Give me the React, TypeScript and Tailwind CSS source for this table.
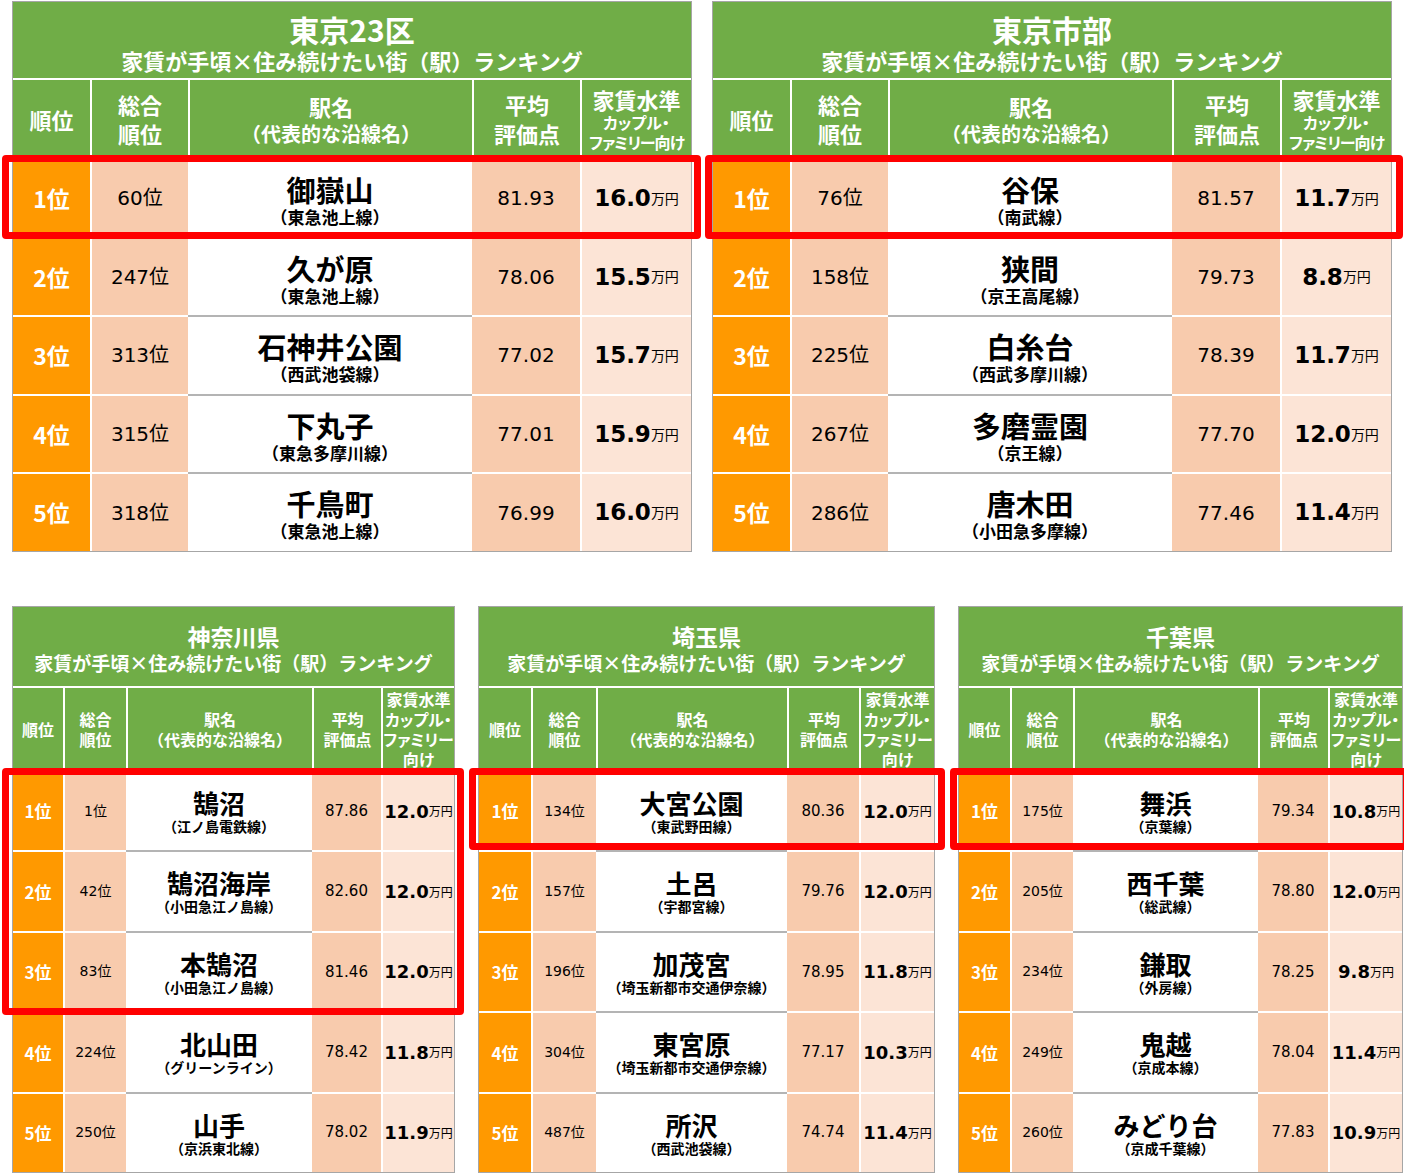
import React from "react";

type Row = { rank: number; total: number; name: string; line: string; score: string; rent: string };

type Size = {
  wrap: string;
  cols: string;
  titleBox: string;
  title: string;
  sub: string;
  headRow: string;
  headMain: string;
  headSub: string;
  row: string;
  rank: string;
  total: string;
  nameBox: string;
  name: string;
  line: string;
  score: string;
  rentNum: string;
  rentUnit: string;
  big: boolean;
};

const jp = "font-['Noto_Sans_CJK_JP',sans-serif]";
const num = "font-['DejaVu_Sans','Noto_Sans_CJK_JP',sans-serif]";

const lg = {
  titleBox: "h-[78px] pt-[10px]",
  title: "text-[30px] leading-[34px]",
  sub: "text-[22px] leading-[28px]",
  headRow: "h-[78px]",
  headMain: "text-[22px] leading-[29px]",
  headSub: "text-[20px] leading-[26px]",
  row: "h-[78.6px]",
  rank: "text-[23px]",
  total: "text-[20px]",
  nameBox: "pt-[12px]",
  name: "text-[29px] leading-[35px]",
  line: "text-[17px] leading-[20px]",
  score: "text-[20px]",
  rentNum: "text-[23px]",
  rentUnit: "text-[14px]",
  big: true,
};

const sm = {
  titleBox: "h-[81px] pt-[14px]",
  title: "text-[23px] leading-[30px]",
  sub: "text-[19px] leading-[24px]",
  headRow: "h-[82px]",
  headMain: "text-[16px] leading-[20px]",
  headSub: "text-[16px] leading-[20px]",
  row: "h-[80.4px]",
  rank: "text-[17px]",
  total: "text-[14px]",
  nameBox: "pt-[15px]",
  name: "text-[26px] leading-[32px]",
  line: "text-[14px] leading-[15px]",
  score: "text-[15px]",
  rentNum: "text-[18px]",
  rentUnit: "text-[12px]",
  big: false,
};

const tables: { title: string; size: Size; hl: string; rows: Row[] }[] = [
  {
    title: "東京23区",
    size: { ...lg, wrap: "w-[680px]", cols: "grid-cols-[77px_98px_284px_108px_111px]" },
    hl: "-left-[10px] top-[154px] w-[699px] h-[84px]",
    rows: [
      { rank: 1, total: 60, name: "御嶽山", line: "東急池上線", score: "81.93", rent: "16.0" },
      { rank: 2, total: 247, name: "久が原", line: "東急池上線", score: "78.06", rent: "15.5" },
      { rank: 3, total: 313, name: "石神井公園", line: "西武池袋線", score: "77.02", rent: "15.7" },
      { rank: 4, total: 315, name: "下丸子", line: "東急多摩川線", score: "77.01", rent: "15.9" },
      { rank: 5, total: 318, name: "千鳥町", line: "東急池上線", score: "76.99", rent: "16.0" },
    ],
  },
  {
    title: "東京市部",
    size: { ...lg, wrap: "w-[680px]", cols: "grid-cols-[77px_98px_284px_108px_111px]" },
    hl: "-left-[7px] top-[154px] w-[698px] h-[84px]",
    rows: [
      { rank: 1, total: 76, name: "谷保", line: "南武線", score: "81.57", rent: "11.7" },
      { rank: 2, total: 158, name: "狭間", line: "京王高尾線", score: "79.73", rent: "8.8" },
      { rank: 3, total: 225, name: "白糸台", line: "西武多摩川線", score: "78.39", rent: "11.7" },
      { rank: 4, total: 267, name: "多磨霊園", line: "京王線", score: "77.70", rent: "12.0" },
      { rank: 5, total: 286, name: "唐木田", line: "小田急多摩線", score: "77.46", rent: "11.4" },
    ],
  },
  {
    title: "神奈川県",
    size: { ...sm, wrap: "w-[443px]", cols: "grid-cols-[50px_63px_186px_69px_73px]" },
    hl: "-left-[10px] top-[162px] w-[462px] h-[247px]",
    rows: [
      { rank: 1, total: 1, name: "鵠沼", line: "江ノ島電鉄線", score: "87.86", rent: "12.0" },
      { rank: 2, total: 42, name: "鵠沼海岸", line: "小田急江ノ島線", score: "82.60", rent: "12.0" },
      { rank: 3, total: 83, name: "本鵠沼", line: "小田急江ノ島線", score: "81.46", rent: "12.0" },
      { rank: 4, total: 224, name: "北山田", line: "グリーンライン", score: "78.42", rent: "11.8" },
      { rank: 5, total: 250, name: "山手", line: "京浜東北線", score: "78.02", rent: "11.9" },
    ],
  },
  {
    title: "埼玉県",
    size: { ...sm, wrap: "w-[457px]", cols: "grid-cols-[52px_65px_191px_72px_75px]" },
    hl: "-left-[9px] top-[162px] w-[476px] h-[82px]",
    rows: [
      { rank: 1, total: 134, name: "大宮公園", line: "東武野田線", score: "80.36", rent: "12.0" },
      { rank: 2, total: 157, name: "土呂", line: "宇都宮線", score: "79.76", rent: "12.0" },
      { rank: 3, total: 196, name: "加茂宮", line: "埼玉新都市交通伊奈線", score: "78.95", rent: "11.8" },
      { rank: 4, total: 304, name: "東宮原", line: "埼玉新都市交通伊奈線", score: "77.17", rent: "10.3" },
      { rank: 5, total: 487, name: "所沢", line: "西武池袋線", score: "74.74", rent: "11.4" },
    ],
  },
  {
    title: "千葉県",
    size: { ...sm, wrap: "w-[445px]", cols: "grid-cols-[51px_63px_185px_70px_74px]" },
    hl: "-left-[8px] top-[162px] w-[460px] h-[82px]",
    rows: [
      { rank: 1, total: 175, name: "舞浜", line: "京葉線", score: "79.34", rent: "10.8" },
      { rank: 2, total: 205, name: "西千葉", line: "総武線", score: "78.80", rent: "12.0" },
      { rank: 3, total: 234, name: "鎌取", line: "外房線", score: "78.25", rent: "9.8" },
      { rank: 4, total: 249, name: "鬼越", line: "京成本線", score: "78.04", rent: "11.4" },
      { rank: 5, total: 260, name: "みどり台", line: "京成千葉線", score: "77.83", rent: "10.9" },
    ],
  },
];

function RankingTable({ title, size: s, hl, rows }: { title: string; size: Size; hl: string; rows: Row[] }) {
  const head = "flex flex-col items-center justify-center text-center text-white font-bold";
  return (
    <div className={`relative shrink-0 ${s.wrap}`}>
      <div className={`border border-[#a6a6a6] ${jp}`}>
        {/* title */}
        <div className={`flex flex-col items-center bg-[#70ad47] border-b-2 border-white text-white font-bold ${s.titleBox}`}>
          <div className={s.title}>{title}</div>
          <div className={s.sub}>家賃が手頃×住み続けたい街（駅）ランキング</div>
        </div>

        {/* column headings */}
        <div className={`grid bg-[#70ad47] ${s.cols} ${s.headRow}`}>
          <div className={`${head} ${s.headMain}`}>順位</div>
          <div className={`${head} border-l-2 border-white ${s.headMain}`}>
            <span>総合</span>
            <span>順位</span>
          </div>
          <div className={`${head} border-l-2 border-white`}>
            <span className={s.headMain}>駅名</span>
            <span className={`whitespace-nowrap ${s.headSub}`}>（代表的な沿線名）</span>
          </div>
          <div className={`${head} border-l-2 border-white ${s.headMain}`}>
            <span>平均</span>
            <span>評価点</span>
          </div>
          {s.big ? (
            <div className={`${head} border-l-2 border-white [font-feature-settings:'palt']`}>
              <span className="text-[22px] leading-[26px]">家賃水準</span>
              <span className="text-[16px] leading-[20px]">カップル・</span>
              <span className="text-[16px] leading-[20px] tracking-[-1px]">ファミリー向け</span>
            </div>
          ) : (
            <div className={`${head} border-l-2 border-white text-[16px] leading-[20px] [font-feature-settings:'palt']`}>
              <span>家賃水準</span>
              <span>カップル・</span>
              <span>ファミリー</span>
              <span>向け</span>
            </div>
          )}
        </div>

        {/* rows */}
        {rows.map((r) => (
          <div key={r.rank} className={`grid ${s.cols} ${s.row}`}>
            <div className={`flex items-center justify-center bg-[#ff9900] border-t-2 border-white text-white font-bold ${s.rank}`}>
              {r.rank}位
            </div>
            <div className={`flex items-center justify-center bg-[#f8cbad] border-t-2 border-l-2 border-white text-black ${num} ${s.total}`}>
              {r.total}位
            </div>
            <div className={`flex flex-col items-center bg-white border-t-2 border-[#b4b4b4] text-black font-bold ${s.nameBox}`}>
              <span className={s.name}>{r.name}</span>
              <span className={`whitespace-nowrap ${s.line}`}>（{r.line}）</span>
            </div>
            <div className={`flex items-center justify-center bg-[#f8cbad] border-t-2 border-white text-black ${num} ${s.score}`}>
              {r.score}
            </div>
            <div className="flex items-center justify-center bg-[#fce4d6] border-t-2 border-l-2 border-white text-black">
              <span className={`font-bold ${num} ${s.rentNum}`}>{r.rent}</span>
              <span className={`${jp} ${s.rentUnit}`}>万円</span>
            </div>
          </div>
        ))}
      </div>
      <div className={`pointer-events-none absolute z-10 rounded-[4px] border-[7px] border-[#ff0000] ${hl}`} />
    </div>
  );
}

export default function App() {
  const [t23, city, kana, sai, chiba] = tables;
  return (
    <div className="w-[1404px] h-[1175px] overflow-hidden bg-white pt-[1px] pl-[12px]">
      <div className="flex gap-[20px]">
        <RankingTable {...t23} />
        <RankingTable {...city} />
      </div>
      <div className="mt-[54px] flex gap-[23px]">
        <RankingTable {...kana} />
        <RankingTable {...sai} />
        <RankingTable {...chiba} />
      </div>
    </div>
  );
}
